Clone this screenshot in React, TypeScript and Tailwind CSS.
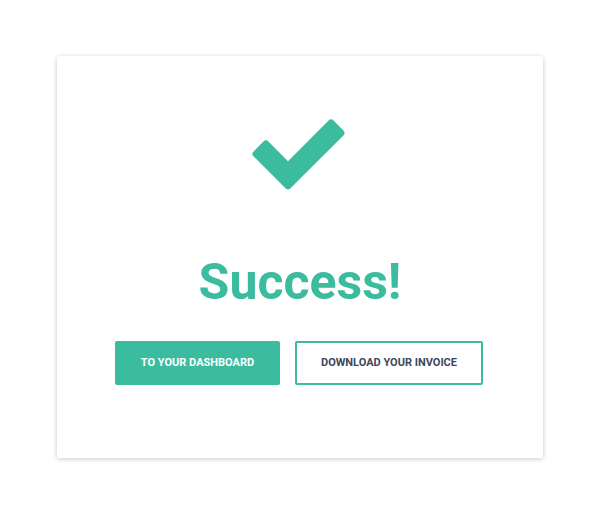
import React from "react";

export default function App() {
  return (
    <div
      className="w-full h-screen bg-white flex items-center justify-center"
      style={{ fontFamily: "Roboto, 'Liberation Sans', sans-serif" }}
    >
      <div className="w-[486px] h-[402px] bg-white rounded-[3px] shadow-[0_1px_5px_rgba(0,0,0,0.22)] flex flex-col items-center pt-[60px]">
        <svg width="100" height="80" viewBox="250 115 100 80" aria-hidden="true">
          <polygon
            points="265.95,143.05 256.05,152.95 288,184.9 340.95,131.95 331.05,122.05 288,165.1"
            fill="#3bbc9e"
            stroke="#3bbc9e"
            strokeWidth="7"
            strokeLinejoin="round"
          />
        </svg>
        <h1 className="mt-[61px] text-[50px] leading-[50px] font-bold text-[#3bbc9e]">
          Success!
        </h1>
        <div className="mt-[34px] flex gap-[15px] pr-[2px]">
          <button className="w-[165px] h-[44px] rounded-[2px] bg-[#3bbc9e] text-white text-[11px] font-bold uppercase">
            To your dashboard
          </button>
          <button className="w-[188px] h-[44px] rounded-[2px] bg-white border-2 border-[#3bbc9e] text-[#3d475c] text-[11px] font-bold uppercase">
            Download your invoice
          </button>
        </div>
      </div>
    </div>
  );
}
